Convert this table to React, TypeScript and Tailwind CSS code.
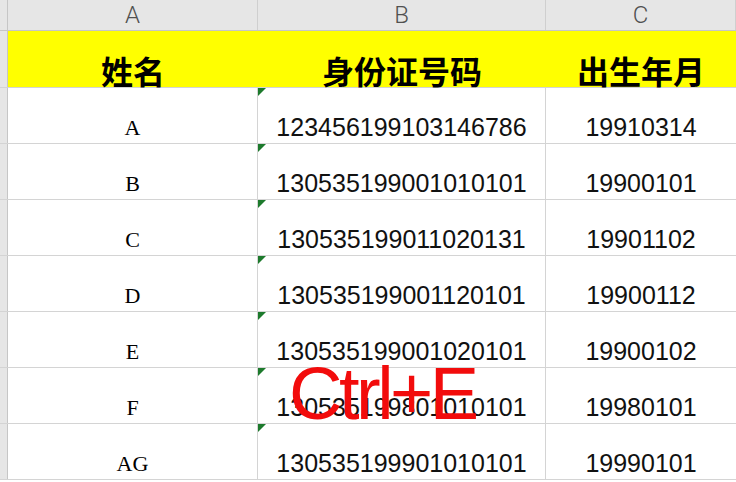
const rows = [
  { name: "A", id: "123456199103146786", birth: "19910314" },
  { name: "B", id: "130535199001010101", birth: "19900101" },
  { name: "C", id: "130535199011020131", birth: "19901102" },
  { name: "D", id: "130535199001120101", birth: "19900112" },
  { name: "E", id: "130535199001020101", birth: "19900102" },
  { name: "F", id: "130535199801010101", birth: "19980101" },
  { name: "AG", id: "130535199901010101", birth: "19990101" },
];

const cjk = "font-['Noto_Sans_CJK_SC',sans-serif]";

export default function App() {
  return (
    <div className="relative w-[736px] h-[482px] overflow-hidden bg-white">
      {/* Column letters */}
      <div className="flex h-[31px] bg-[#e6e6e6] border-b border-[#c6c6c6]">
        <div className="w-[8px] shrink-0 border-r border-[#c6c6c6]" />
        {["A", "B", "C"].map((c, i) => (
          <div
            key={c}
            className={
              "flex items-center justify-center font-['Roboto',sans-serif] font-light text-[24px] leading-none text-[#505050] border-r border-[#cfcfcf] " +
              (i === 0 ? "w-[250px] shrink-0" : i === 1 ? "w-[288px] shrink-0" : "flex-1")
            }
          >
            {c}
          </div>
        ))}
      </div>

      {/* Yellow title row */}
      <div className="flex h-[57px] border-b border-[#d4d4d4]">
        <div className="w-[8px] shrink-0 bg-[#e6e6e6] border-r border-[#c6c6c6]" />
        <div className={`flex flex-1 bg-[#ffff00] font-bold text-[32px] leading-none text-black ${cjk}`}>
          <div className="w-[250px] shrink-0 flex items-end justify-center pb-[1px]">姓名</div>
          <div className="w-[288px] shrink-0 flex items-end justify-center pb-[1px]">身份证号码</div>
          <div className="flex-1 flex items-end justify-center pb-[1px]">出生年月</div>
        </div>
      </div>

      {/* Data rows */}
      {rows.map((r) => (
        <div key={r.id} className="flex h-[56px] border-b border-[#d4d4d4]">
          <div className="w-[8px] shrink-0 bg-[#e6e6e6] border-r border-[#c6c6c6]" />
          <div className="w-[250px] shrink-0 flex items-end justify-center pb-[4px] border-r border-[#d4d4d4] font-['Liberation_Serif',serif] text-[22px] leading-none text-black">
            {r.name}
          </div>
          <div className="relative w-[288px] shrink-0 flex items-end justify-center pb-[3px] border-r border-[#d4d4d4] font-['Liberation_Sans',sans-serif] text-[25px] leading-none text-[#111]">
            <span className="absolute left-0 top-0 w-0 h-0 border-t-[8px] border-r-[8px] border-t-[#1d7a2c] border-r-transparent" />
            {r.id}
          </div>
          <div className="flex-1 flex items-end justify-center pb-[3px] font-['Liberation_Sans',sans-serif] text-[25px] leading-none text-[#111]">
            {r.birth}
          </div>
        </div>
      ))}

      {/* Shortcut overlay */}
      <div className="absolute left-[289px] top-[357px] font-['Liberation_Sans',sans-serif] text-[74px] leading-none tracking-[-3.5px] text-[#f20c0c]">
        Ctrl+E
      </div>
    </div>
  );
}
